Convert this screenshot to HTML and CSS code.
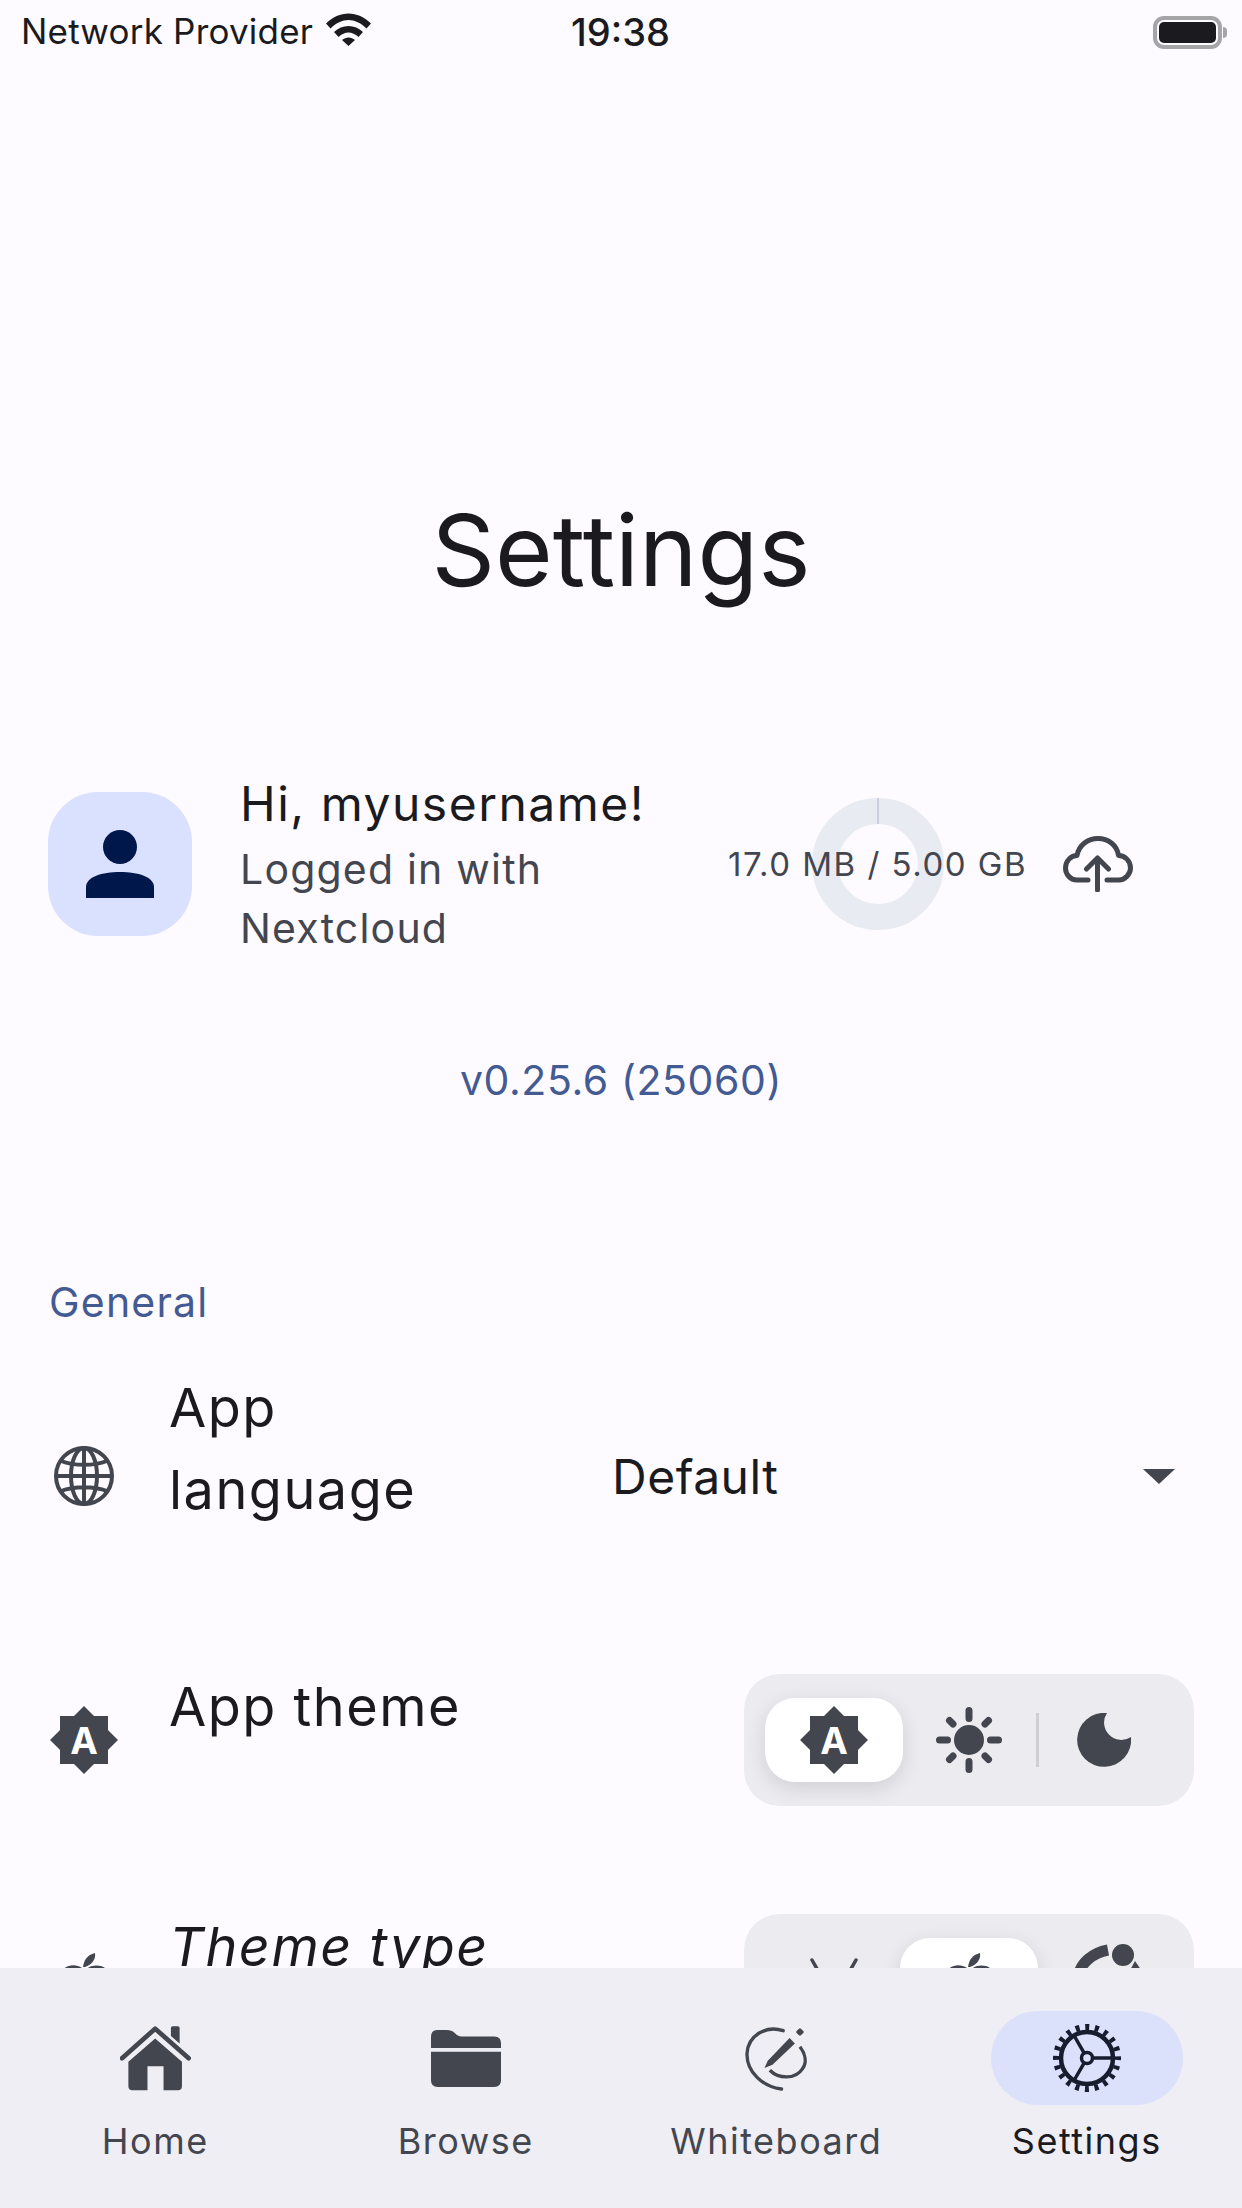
FILE: index.html
```html
<!DOCTYPE html>
<html lang="en">
<head>
  <meta charset="UTF-8">
  <meta name="viewport" content="width=device-width, initial-scale=1.0">
  <title>Settings</title>
  <link rel="stylesheet" href="styles.css">
</head>
<body>
  <!-- Status bar -->
  <div class="status-bar">
    <div class="status-left">
      <span class="carrier">Network Provider</span>
      <svg class="wifi" viewBox="0 0 45 33">
        <path d="M0 10.5C13 -3 32 -3 45 10.5L40.500 15.500C29 4 16 4 4.500 15.500Z"/>
        <path d="M8 19C16 11 29 11 37 19L32.500 24C26 18 19 18 12.500 24Z"/>
        <path d="M16 27C20 23.500 25 23.500 29 27L22.500 33Z"/>
      </svg>
    </div>
    <span class="clock">19:38</span>
    <div class="battery"><div class="battery-fill"></div></div>
  </div>

  <main class="content">
    <h1 class="page-title">Settings</h1>

    <!-- Profile -->
    <section class="profile">
      <div class="avatar">
        <svg width="68" height="68" viewBox="0 0 68 68">
          <ellipse cx="34" cy="17" rx="17" ry="17"/>
          <path d="M0 68V57C0 47 16 42 34 42S68 47 68 57V68Z"/>
        </svg>
      </div>
      <div class="profile-text">
        <div class="greeting">Hi, myusername!</div>
        <div class="login-note">Logged in with Nextcloud</div>
      </div>
      <div class="storage">
        <svg class="ring" viewBox="0 0 132 132">
          <circle cx="66" cy="66" r="53" fill="none" stroke="#e9ebf2" stroke-width="26"/>
          <rect x="65.500" y="0" width="1" height="26" fill="#a9b3cf"/>
        </svg>
        <span class="storage-label">17.0 MB / 5.00 GB</span>
      </div>
      <svg class="cloud" width="70" height="56" viewBox="0 0 70 56">
        <path d="M25 44H14C7 44 2.500 38 2.500 32C2.500 25 8 19.500 14 19.500C16 9 25 2.500 35 2.500C45 2.500 54 9 55.500 19.500C62 19.500 67.500 25 67.500 32C67.500 38 62 44 56 44H44"/>
        <path d="M34.500 54V22M23.500 33L34.500 22L45.500 33"/>
      </svg>
    </section>

    <div class="version">v0.25.6 (25060)</div>

    <h2 class="section-label">General</h2>

    <div class="row row-tall">
      <svg class="row-icon" width="60" height="60" viewBox="0 0 60 60">
        <g fill="none" stroke="#44464f" stroke-width="4">
          <circle cx="30" cy="30" r="28"/>
          <ellipse cx="30" cy="30" rx="13" ry="28"/>
          <path d="M30 2V58M2 30H58M7 15C20 20 40 20 53 15M7 45C20 40 40 40 53 45"/>
        </g>
      </svg>
      <div class="row-title title-narrow">App language</div>
      <div class="dropdown">
        <span>Default</span>
        <span class="dropdown-arrow"></span>
      </div>
    </div>

    <div class="row">
      <svg class="row-icon" width="68" height="68" viewBox="0 0 68 68">
        <g fill="#44464f">
          <rect x="10" y="10" width="48" height="48"/>
          <rect x="10" y="10" width="48" height="48" transform="rotate(45 34 34)"/>
        </g>
        <text class="star-letter" x="34" y="47.500" text-anchor="middle">A</text>
      </svg>
      <div class="row-title">App theme</div>
      <div class="segments">
        <div class="segment selected">
          <svg width="68" height="68" viewBox="0 0 68 68">
            <g fill="#44464f">
              <rect x="10" y="10" width="48" height="48"/>
              <rect x="10" y="10" width="48" height="48" transform="rotate(45 34 34)"/>
            </g>
            <text class="star-letter" x="34" y="47.500" text-anchor="middle">A</text>
          </svg>
        </div>
        <div class="segment">
          <svg width="68" height="68" viewBox="0 0 68 68">
            <circle cx="34" cy="34" r="15" fill="#44464f"/>
            <g stroke="#44464f" stroke-width="7" stroke-linecap="round">
              <path d="M34 4.500V12.500M34 55.500V63.500M4.500 34H12.500M55.500 34H63.500"/>
              <path d="M14.500 14.500L18 18M50 50L53.500 53.500M14.500 53.500L18 50M50 18L53.500 14.500"/>
            </g>
          </svg>
        </div>
        <div class="segment divided">
          <svg width="54" height="54" viewBox="0 0 54 54">
            <path fill="#44464f" d="M30 0A27 27 0 1 0 54 24A17.300 17.300 0 0 1 30 0Z"/>
          </svg>
        </div>
      </div>
    </div>

    <div class="row">
      <svg class="row-icon" width="60" height="54" viewBox="0 0 60 54">
        <path fill="#44464f" d="M29 14C30 7 33 2 41 0C42 6 38 12 31 14Z"/>
        <path fill="#44464f" transform="translate(4 1)" d="M3 18C8 10 18 10 24 14C26 15 28 15 30 14C36 10 46 11 50 17C42 22 44 34 53 38C49 48 44 54 38 54C33 54 31 51 27 51C23 51 21 54 16 54C8 54 0 40 0 30C0 25 1 21 3 18Z"/>
      </svg>
      <div class="row-title title-italic">Theme type</div>
      <div class="segments">
        <div class="segment">
          <svg width="68" height="54" viewBox="0 0 68 54">
            <g fill="none" stroke="#44464f" stroke-width="3.500" stroke-linecap="round">
              <path d="M12 7L20 21M56 7L48 21"/>
            </g>
            <path fill="#44464f" d="M8 45C8 30 20 19 34 19S60 30 60 45Z"/>
          </svg>
        </div>
        <div class="segment selected">
          <svg width="60" height="54" viewBox="0 0 60 54">
            <path fill="#44464f" d="M29 14C30 7 33 2 41 0C42 6 38 12 31 14Z"/>
            <path fill="#44464f" transform="translate(4 1)" d="M3 18C8 10 18 10 24 14C26 15 28 15 30 14C36 10 46 11 50 17C42 22 44 34 53 38C49 48 44 54 38 54C33 54 31 51 27 51C23 51 21 54 16 54C8 54 0 40 0 30C0 25 1 21 3 18Z"/>
          </svg>
        </div>
        <div class="segment">
          <svg class="icon-overflow" width="72" height="72" viewBox="0 0 72 72">
            <path d="M10 32C13 19 24 9 40 6" fill="none" stroke="#44464f" stroke-width="11"/>
            <circle cx="55" cy="11" r="11" fill="#44464f"/>
            <path d="M67 17L76 30H60Z" fill="#44464f"/>
          </svg>
        </div>
      </div>
    </div>
  </main>

  <!-- Bottom navigation -->
  <nav class="nav">
    <div class="nav-item">
      <div class="nav-pill">
        <svg width="71" height="65" viewBox="180 198 212 194">
          <path d="M205 305L285 235L365 305V378Q365 390 353 390H310V318H262V390H217Q205 390 205 378Z" fill="#44464f"/>
          <path d="M186 294L285 206L385 294" fill="none" stroke="#44464f" stroke-width="14" stroke-linecap="round" stroke-linejoin="round"/>
          <path d="M332 204Q332 199 337 199H353Q358 199 358 204V250L332 228Z" fill="#44464f"/>
        </svg>
      </div>
      <span class="nav-label">Home</span>
    </div>
    <div class="nav-item">
      <div class="nav-pill">
        <svg width="70" height="57" viewBox="1113 208 209 170">
          <path d="M1113 262V228Q1113 208 1133 208H1160Q1175 208 1183 216Q1192 227 1205 227H1302Q1322 227 1322 247V262Z" fill="#44464f"/>
          <path d="M1113 273H1322V358Q1322 378 1302 378H1133Q1113 378 1113 358Z" fill="#44464f"/>
        </svg>
      </div>
      <span class="nav-label">Browse</span>
    </div>
    <div class="nav-item">
      <div class="nav-pill">
        <svg width="67" height="67" viewBox="70 15 200 200">
          <g fill="none" stroke="#44464f" stroke-width="10" stroke-linecap="round">
            <path d="M190 32C140 15 85 45 82 100C80 155 130 200 185 206"/>
            <path d="M150 150C175 175 225 180 248 145C262 125 255 100 240 80" stroke-linecap="butt"/>
          </g>
          <path d="M134 143L144 122L209 54L225 70L158 134Z" fill="#44464f"/>
          <rect x="231" y="27" width="18" height="18" rx="4" transform="rotate(45 240 36)" fill="#44464f"/>
        </svg>
      </div>
      <span class="nav-label">Whiteboard</span>
    </div>
    <div class="nav-item active">
      <div class="nav-pill">
        <svg width="72" height="72" viewBox="0 0 72 72">
          <g fill="none" stroke="#171c2e">
            <circle cx="36" cy="36" r="26" stroke-width="4.500"/>
            <circle cx="36" cy="36" r="31" stroke-width="6" stroke-dasharray="4 5.739" stroke-dashoffset="2"/>
            <path d="M41.500 36H62M33.200 40.800L23 58.500M33.200 31.200L23 13.500" stroke-width="3.500"/>
            <circle cx="36" cy="36" r="5.500" stroke-width="3.500"/>
          </g>
        </svg>
      </div>
      <span class="nav-label">Settings</span>
    </div>
  </nav>
</body>
</html>
```

FILE: styles.css
```css
body {
  margin: 0;
  width: 1242px;
  height: 2208px;
  overflow: hidden;
  display: flex;
  flex-direction: column;
  background-color: #fdfbff;
  color: #1b1b1f;
  font-family: Inter, "Noto Sans", sans-serif;
}

/* status bar */
.status-bar {
  height: 64px;
  flex-shrink: 0;
  display: grid;
  grid-template-columns: 1fr auto 1fr;
  align-items: center;
  padding: 0 20px 0 21px;
}

.status-left {
  display: flex;
  align-items: center;
  gap: 13px;
  margin-bottom: 2px;
}

.carrier {
  font-size: 35px;
  letter-spacing: 0.2px;
}

.wifi {
  width: 45px;
  height: 33px;
  margin-top: -4px;
  fill: #1b1b1f;
}

.clock {
  font-size: 38px;
  font-weight: 500;
  margin-left: -2px;
}

.battery {
  justify-self: end;
  position: relative;
  box-sizing: border-box;
  width: 69px;
  height: 33px;
  padding: 2px;
  border: 4px solid #a5a5a8;
  border-radius: 11px;
}

.battery::after {
  content: "";
  position: absolute;
  right: -9px;
  top: 7px;
  width: 4px;
  height: 11px;
  background-color: #a5a5a8;
  border-radius: 0 4px 4px 0;
}

.battery-fill {
  height: 100%;
  background-color: #1b1b1f;
  border-radius: 5px;
}

/* scrolling content */
.content {
  flex: 1;
  min-height: 0;
  overflow: hidden;
}

.page-title {
  margin: 0;
  padding-top: 428px;
  text-align: center;
  font-size: 99px;
  line-height: 116px;
  font-weight: 400;
}

.profile {
  display: flex;
  align-items: center;
  margin-top: 161px;
  padding-left: 48px;
}

.avatar {
  width: 144px;
  height: 144px;
  flex-shrink: 0;
  display: flex;
  align-items: center;
  justify-content: center;
  background-color: #dae1ff;
  border-radius: 50px;
  fill: #00174b;
}

.profile-text {
  width: 420px;
  margin-left: 48px;
}

.greeting {
  font-size: 48px;
  line-height: 69px;
  letter-spacing: 1.5px;
}

.login-note {
  margin-top: 2px;
  font-size: 41px;
  line-height: 59px;
  letter-spacing: 1.2px;
  color: #44464f;
}

.storage {
  position: relative;
  display: flex;
  align-items: center;
  margin-left: 68px;
}

.ring {
  position: absolute;
  left: 50%;
  top: 50%;
  width: 132px;
  height: 132px;
  margin: -66px 0 0 -66px;
}

.storage-label {
  position: relative;
  font-size: 33px;
  letter-spacing: 1.5px;
  color: #44464f;
}

.cloud {
  margin-left: 36px;
  fill: none;
  stroke: #44464f;
  stroke-width: 5;
  stroke-linecap: round;
  stroke-linejoin: round;
}

.version {
  margin-top: 92px;
  text-align: center;
  font-size: 41px;
  line-height: 60px;
  letter-spacing: 0.6px;
  color: #445a92;
}

.section-label {
  margin: 162px 0 0 49px;
  font-size: 41px;
  line-height: 60px;
  font-weight: 400;
  letter-spacing: 1.2px;
  color: #445a92;
}

/* setting rows */
.row {
  display: flex;
  align-items: center;
  min-height: 240px;
  padding: 0 48px;
}

.row-tall {
  min-height: 288px;
}

.row-icon {
  width: 72px;
  flex-shrink: 0;
}

.row-title {
  flex: 1;
  margin-left: 49px;
  margin-bottom: 66px;
  font-size: 54px;
  line-height: 82px;
  letter-spacing: 1.5px;
}

.title-narrow {
  flex: none;
  width: 300px;
  margin-bottom: 54px;
}

.title-italic {
  font-style: italic;
}

.star-letter {
  font-size: 37px;
  font-weight: 700;
  fill: #ffffff;
}

.dropdown {
  flex: 1;
  display: flex;
  align-items: center;
  justify-content: space-between;
  margin-left: 143px;
  padding-right: 19px;
  font-size: 48px;
  letter-spacing: 0.5px;
}

.dropdown-arrow {
  width: 0;
  height: 0;
  border-left: 16px solid transparent;
  border-right: 16px solid transparent;
  border-top: 15px solid #44464f;
}

.segments {
  box-sizing: border-box;
  width: 450px;
  height: 132px;
  flex-shrink: 0;
  display: grid;
  grid-template-columns: repeat(3, 135px);
  align-items: center;
  padding: 0 22.5px;
  background-color: #ecebf0;
  border-radius: 36px;
}

.segment {
  position: relative;
  height: 84px;
  display: flex;
  align-items: center;
  justify-content: center;
}

.segment.selected {
  margin: 0 -1.5px;
  background-color: #ffffff;
  border-radius: 30px;
  box-shadow: 0 6px 20px rgba(0, 0, 0, 0.12);
}

.segment.divided::before {
  content: "";
  position: absolute;
  left: -1px;
  top: 15px;
  width: 3px;
  height: 54px;
  background-color: #cfcfd3;
}

.icon-overflow {
  overflow: visible;
}

/* bottom nav */
.nav {
  position: relative;
  height: 240px;
  flex-shrink: 0;
  box-sizing: border-box;
  display: grid;
  grid-template-columns: repeat(4, 1fr);
  padding-top: 43px;
  background-color: #eeeef4;
}

.nav-item {
  display: flex;
  flex-direction: column;
  align-items: center;
}

.nav-pill {
  width: 192px;
  height: 94px;
  display: flex;
  align-items: center;
  justify-content: center;
  border-radius: 47px;
}

.nav-item.active .nav-pill {
  background-color: #dbe1fa;
}

.nav-label {
  margin-top: 11px;
  font-size: 36px;
  line-height: 50px;
  letter-spacing: 1.5px;
  color: #44464f;
}

.nav-item.active .nav-label {
  color: #1b1b1f;
}
```
